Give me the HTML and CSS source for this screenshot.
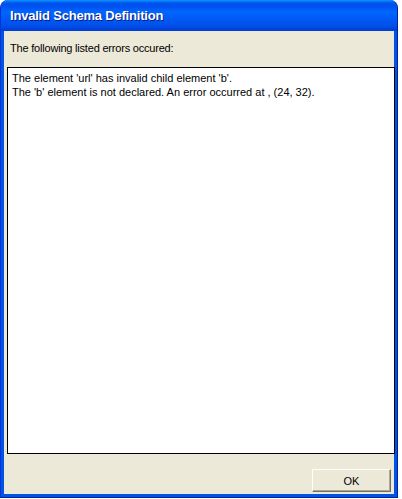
FILE: index.html
```html
<!DOCTYPE html>
<html>
<head>
<meta charset="utf-8">
<link rel="stylesheet" href="styles.css">
</head>
<body>
<div class="window">
  <div class="titlebar"><span class="title">Invalid Schema Definition</span></div>
  <div class="client">
    <div class="label">The following listed errors occured:</div>
    <div class="errors">
      <div>The element 'url' has invalid child element 'b'.</div>
      <div>The 'b' element is not declared. An error occurred at , (24, 32).</div>
    </div>
    <div class="buttons"><button class="btn">OK</button></div>
  </div>
</div>
</body>
</html>
```
FILE: styles.css
```css
html, body { margin: 0; padding: 0; background: #ffffff; }
body { width: 402px; height: 499px; overflow: hidden; }
.window {
  width: 398px;
  height: 498px;
  display: flex;
  flex-direction: column;
  background: #0054e3;
  border-radius: 8px 8px 0 0;
  border-left: 1px solid #0831d9;
  border-right: 1px solid #001ea0;
  border-bottom: 1px solid #001ea0;
  box-sizing: border-box;
}
.titlebar {
  height: 31px;
  flex: none;
  display: flex;
  align-items: center;
  padding-left: 9px;
  border-radius: 7px 7px 0 0;
  background: linear-gradient(to bottom, #0997ff 0px, #0053ee 3px, #0050ee 6px, #0066ff 12px, #0058f2 20px, #0050e8 26px, #003dd7 30px, #0040dc 31px);
}
.title {
  font-family: "Liberation Sans", sans-serif;
  font-weight: bold;
  font-size: 13px;
  color: #ffffff;
  text-shadow: 1px 1px 0 #0a1883;
  letter-spacing: -0.2px;
}
.client {
  flex: 1;
  margin: 0 3px 3px 3px;
  background: #ece9d8;
  display: flex;
  flex-direction: column;
  padding: 0 0 0 3px;
}
.label {
  font-family: "Liberation Sans", sans-serif;
  font-size: 11px;
  letter-spacing: -0.2px;
  color: #000000;
  margin: 10px 0 0 3px;
  height: 14px;
  line-height: 14px;
}
.errors {
  margin: 12px 0 0 0;
  width: 388px;
  height: 387px;
  box-sizing: border-box;
  background: #ffffff;
  border: 1px solid #000000;
  padding: 3px 0 0 4px;
  font-family: "Liberation Sans", sans-serif;
  font-size: 11px;
  line-height: 14px;
  color: #000000;
}
.buttons {
  display: flex;
  justify-content: flex-end;
  padding: 15px 3px 0 0;
}
.btn {
  width: 79px;
  height: 23px;
  margin: 0;
  padding: 0;
  background: #ece9d8;
  border: 1px solid;
  border-color: #ffffff #716f64 #716f64 #ffffff;
  box-shadow: inset -1px -1px 0 #aca899;
  font-family: "Liberation Sans", sans-serif;
  font-size: 11px;
  color: #000000;
}
```
